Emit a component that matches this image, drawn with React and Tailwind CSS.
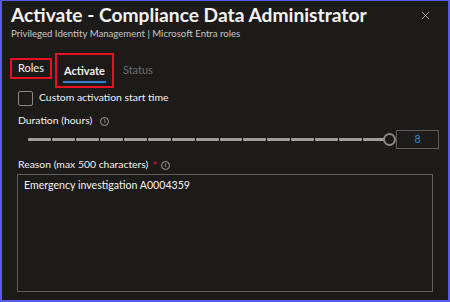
import { X } from 'lucide-react'

function InfoIcon() {
  return (
    <span className="inline-flex w-[9px] h-[9px] rounded-full border border-[#a19f9d] items-center justify-center text-[6px] leading-none text-[#a19f9d] font-bold">
      i
    </span>
  )
}

function Slider() {
  const segments = Array.from({ length: 15 })
  return (
    <div className="w-[370px] relative h-[19px] flex items-center">
      <div className="flex items-center gap-[1px] w-[358px] ml-[9px]">
        {segments.map((_, i) => (
          <div key={i} className="h-[3px] flex-1 bg-[#a19f9d] rounded-[1px]" />
        ))}
      </div>
      <div className="absolute left-[364px] top-[3px] w-[13px] h-[13px] rounded-full border-2 border-[#8a8886] bg-[#1b1a19]" />
    </div>
  )
}

export default function App() {
  return (
    <div
      className="w-[450px] h-[302px] bg-[#1c1b1a] border-2 border-t border-[#5a5ae8] text-[#f3f2f1] overflow-hidden"
      style={{ fontFamily: 'Lato, "Open Sans", sans-serif' }}
    >
      <div className="flex items-center justify-between pl-[9px] pr-[16px] h-[27px]">
        <h1 className="text-[19.2px] font-bold leading-[26px]">Activate - Compliance Data Administrator</h1>
        <X size={13} strokeWidth={1.4} className="text-[#d2d0ce] mt-[1px]" />
      </div>
      <p className="pl-[9px] text-[9.6px] leading-[12px] h-[12px] text-[#c8c6c4]">
        Privileged Identity Management | Microsoft Entra roles
      </p>

      <div className="flex items-start pl-[8px] mt-[13px] h-[35px]">
        <div className="mt-[5px] border-2 border-[#e81123] px-[6px] h-[21px] flex items-center text-[11px]">Roles</div>
        <div className="ml-[3px] border-2 border-[#e81123] px-[6px] h-[35px] flex flex-col justify-center">
          <span className="text-[11px] font-bold px-[1px] border-b-2 border-[#2f80d6] pb-[3px] mt-[5px] leading-[14px]">Activate</span>
        </div>
        <div className="ml-[9px] mt-[9px] text-[11px] text-[#6e6d6b]">Status</div>
      </div>

      <div className="flex items-center pl-[16px] mt-[2px] h-[16px] gap-[6px]">
        <div className="w-[15px] h-[15px] border border-[#8a8886] rounded-[2px]" />
        <span className="text-[10.4px]">Custom activation start time</span>
      </div>

      <div className="flex items-center pl-[16px] mt-[8px] h-[14px] gap-[8px]">
        <span className="text-[10.4px]">Duration (hours)</span>
        <InfoIcon />
      </div>

      <div className="flex items-center pl-[17px] mt-[2px] h-[19px]">
        <Slider />
        <div className="ml-[7px] w-[43px] h-[19px] border border-[#605e5c] flex items-center justify-center text-[10.5px] text-[#2f85d6]">8</div>
      </div>

      <div className="flex items-center pl-[16px] mt-[9px] h-[14px] gap-[4px]">
        <span className="text-[10.4px]">Reason (max 500 characters)</span>
        <span className="text-[#e81123] text-[11px] leading-none">*</span>
        <InfoIcon />
      </div>

      <div className="mx-[15px] mt-[2px] h-[118px] border border-[#605e5c] px-[6px] pt-[3px] text-[10.6px]">
        Emergency investigation A0004359
      </div>
    </div>
  )
}
